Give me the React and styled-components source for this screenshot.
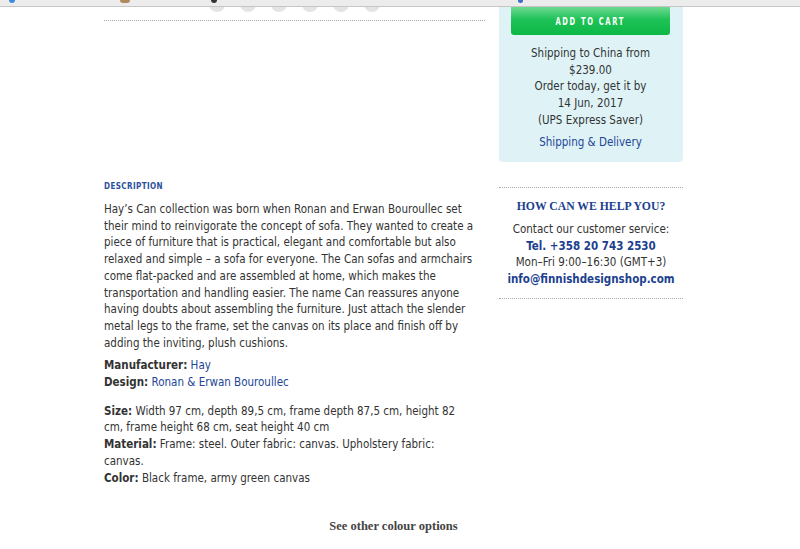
import React from 'react';
import styled, { createGlobalStyle } from 'styled-components';

const GlobalStyle = createGlobalStyle`
  html, body {
    margin: 0;
    padding: 0;
    background: #fff;
  }
  body {
    font-family: "DejaVu Sans Condensed", "DejaVu Sans", Verdana, sans-serif;
    font-size: 11.5px;
    color: #333;
  }
  * { box-sizing: border-box; }
`

const TopBar = styled.div`
  position: relative;
  height: 7px;
  background: #ececec;
  border-bottom: 1px solid #c6c6c6;
`

const BarBit = styled.span`
  position: absolute;
  top: 0;
  left: ${p => p.$x}px;
  width: ${p => p.$w}px;
  height: 3px;
  border-radius: 0 0 3px 3px;
  background: ${p => p.$c};
`

const Page = styled.div`
  display: grid;
  grid-template-columns: 381px 184px;
  column-gap: 14px;
  margin-left: 104px;
`

const LeftCol = styled.div`
  display: flex;
  flex-direction: column;
`

const Dots = styled.div`
  height: 5px;
  overflow: hidden;
  display: flex;
  justify-content: center;
  gap: 15px;
`

const Dot = styled.span`
  flex: none;
  width: 16px;
  height: 16px;
  margin-top: -11px;
  border-radius: 50%;
  background: #e4e4e4;
`

const Dotted = styled.hr`
  margin: ${p => p.$m || '0'};
  border: 0;
  border-top: 1px dotted #a8a8a8;
  height: 0;
`

const SectionTitle = styled.h3`
  margin: 161px 0 0;
  font-family: "DejaVu Sans Condensed", "DejaVu Sans", sans-serif;
  font-weight: bold;
  font-size: 8px;
  letter-spacing: 0.4px;
  color: #2c4f9c;
  line-height: 10px;
`

const Para = styled.p`
  margin: ${p => p.$m || '0'};
  max-width: ${p => p.$w || 'none'};
  line-height: 16.7px;
`

const Link = styled.a`
  color: #1c4596;
  text-decoration: none;
`

const Label = styled.b`
  color: #333;
`

const MoreOptions = styled.div`
  grid-column: 1 / -1;
  margin-top: 33px;
  text-align: center;
  font-family: "Liberation Serif", "DejaVu Serif", serif;
  font-weight: bold;
  font-size: 12.5px;
  color: #444;
`

const RightCol = styled.div`
  display: flex;
  flex-direction: column;
`

const ShipBox = styled.div`
  background: #dff3f7;
  border-radius: 0 0 4px 4px;
  padding: 0 13px 12px 12px;
  text-align: center;
  line-height: 16.7px;
`

const CartButton = styled.button`
  display: block;
  width: 100%;
  height: 28px;
  margin: 0 0 10px;
  border: 0;
  border-radius: 0 0 3px 3px;
  background: linear-gradient(#6fd991, #1ec257 45%, #0cb846);
  color: #fff;
  font-family: "DejaVu Sans Condensed", "DejaVu Sans", sans-serif;
  font-weight: bold;
  font-size: 11px;
  padding: 0;
  overflow: hidden;
`

const CartLabel = styled.span`
  display: inline-block;
  letter-spacing: 2.5px;
  transform: scaleX(0.68);
  white-space: nowrap;
`

const ShipLink = styled(Link)`
  display: block;
  margin-top: 5px;
`

const Help = styled.div`
  text-align: center;
  line-height: 16.5px;
  padding: 8px 0 11px;
`

const HelpTitle = styled.h4`
  margin: 0 0 3px;
  font-family: "Liberation Serif", "DejaVu Serif", serif;
  font-weight: bold;
  font-size: 11.7px;
  color: #1c3f8f;
  line-height: 22px;
`

const Strong = styled.div`
  font-weight: bold;
  color: #1c3f8f;
`

export default function App() {
  return (
    <>
      <GlobalStyle />
      <TopBar>
        <BarBit $x={9} $w={6} $c="#3b8be0" />
        <BarBit $x={120} $w={10} $c="#b08a5a" />
        <BarBit $x={211} $w={6} $c="#333" />
        <BarBit $x={518} $w={5} $c="#3b6fc8" />
      </TopBar>
      <Page>
        <LeftCol>
          <Dots>
            {[0, 1, 2, 3, 4, 5].map(i => <Dot key={i} />)}
          </Dots>
          <Dotted $m="8px 0 0" />
          <SectionTitle>DESCRIPTION</SectionTitle>
          <Para $m="9px 0 0">
            Hay’s Can collection was born when Ronan and Erwan Bouroullec set their mind to reinvigorate the concept of sofa. They wanted to create a piece of furniture that is practical, elegant and comfortable but also relaxed and simple – a sofa for everyone. The Can sofas and armchairs come flat-packed and are assembled at home, which makes the transportation and handling easier. The name Can reassures anyone having doubts about assembling the furniture. Just attach the slender metal legs to the frame, set the canvas on its place and finish off by adding the inviting, plush cushions.
          </Para>
          <Para $m="6px 0 0">
            <Label>Manufacturer:</Label> <Link href="#">Hay</Link><br />
            <Label>Design:</Label> <Link href="#">Ronan &amp; Erwan Bouroullec</Link>
          </Para>
          <Para $m="12px 0 0" $w="368px">
            <Label>Size:</Label> Width 97 cm, depth 89,5 cm, frame depth 87,5 cm, height 82 cm, frame height 68 cm, seat height 40 cm<br />
            <Label>Material:</Label> Frame: steel. Outer fabric: canvas. Upholstery fabric: canvas.<br />
            <Label>Color:</Label> Black frame, army green canvas
          </Para>
        </LeftCol>
        <RightCol>
          <ShipBox>
            <CartButton><CartLabel>ADD TO CART</CartLabel></CartButton>
            Shipping to China from<br />
            $239.00<br />
            Order today, get it by<br />
            14 Jun, 2017<br />
            (UPS Express Saver)
            <ShipLink href="#">Shipping &amp; Delivery</ShipLink>
          </ShipBox>
          <Dotted $m="25px 0 0" />
          <Help>
            <HelpTitle>HOW CAN WE HELP YOU?</HelpTitle>
            Contact our customer service:
            <Strong>Tel. +358 20 743 2530</Strong>
            Mon–Fri 9:00–16:30 (GMT+3)
            <Strong>info@finnishdesignshop.com</Strong>
          </Help>
          <Dotted />
        </RightCol>
        <MoreOptions>See other colour options</MoreOptions>
      </Page>
    </>
  );
}
